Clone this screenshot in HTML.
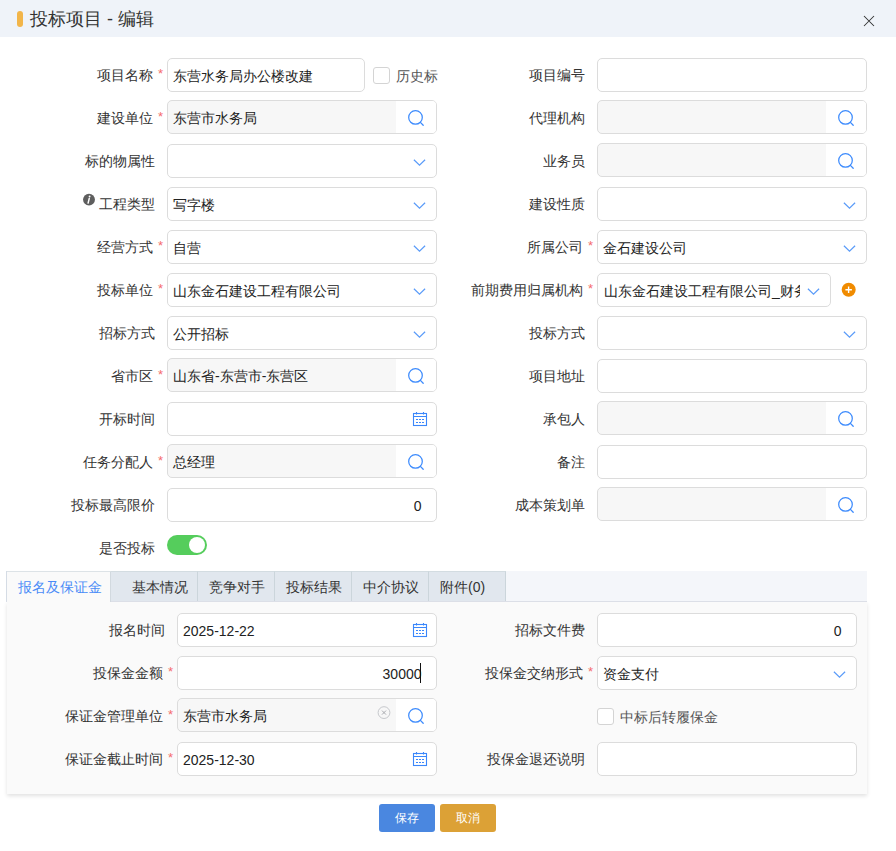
<!DOCTYPE html><html><head><meta charset="utf-8"><style>
*{box-sizing:border-box;margin:0;padding:0}
html,body{width:896px;height:851px;background:#fff;overflow:hidden;font-family:"Liberation Sans",sans-serif;font-size:14px;color:#333;position:relative}
.hdr{position:absolute;left:0;top:0;width:896px;height:37px;background:#eff3f9}
.bar{position:absolute;left:17px;top:11px;width:6px;height:16px;border-radius:3px;background:#f2b54a}
.title{position:absolute;left:30px;top:1px;height:37px;line-height:37px;font-size:18px;color:#333}
.close{position:absolute;left:862px;top:14px;width:14px;height:14px}
.lbl{position:absolute;width:300px;height:34px;line-height:34px;text-align:right;color:#333;white-space:nowrap}
.ast{position:absolute;height:34px;line-height:34px;color:#f56c6c;font-size:13px}
.fld{position:absolute;height:34px;border:1px solid #dcdcdc;border-radius:5px;overflow:hidden}
.txt{position:absolute;top:1px;height:32px;line-height:32px;color:#222;white-space:nowrap}
.sbtn{position:absolute;right:0;top:0;width:40px;height:32px;background:#fff}
.sbtn svg{position:absolute;left:11px;top:8px}
.chev{position:absolute;right:9px;top:13.5px;width:15px;height:8px}
.chev svg{display:block}
.cal{position:absolute;right:8px;top:8px;width:16px;height:16px}
.cal svg{display:block}
.chk{position:absolute;width:17px;height:17px;border:1px solid #d4d4d4;border-radius:3px;background:#fff}
.tabs{position:absolute;left:6px;top:571px;width:861px;height:31px;background:#f4f6fa;border-bottom:1px solid #dcdfe7;border-left:1px solid #d5dce5}
.tab{position:absolute;top:0;height:30px;line-height:31px;background:#e1e7ee;border-top:1px solid #d3dce1;border-right:1px solid #cbd5db;color:#333;white-space:nowrap}
.panel{position:absolute;left:7px;top:602px;width:860px;height:192px;background:#fafafa;box-shadow:0 2px 4px rgba(0,0,0,.12)}
.btn{position:absolute;top:804px;width:56px;height:28px;border-radius:3px;color:#fff;text-align:center;line-height:28px;font-size:12px;font-weight:500}
</style></head><body>
<div class="hdr"><div class="bar"></div><div class="title">投标项目 - 编辑</div>
<svg class="close" viewBox="0 0 14 14"><path d="M2 2 L12 12 M12 2 L2 12" stroke="#333" stroke-width="1.05"/></svg></div>

<div class="lbl" style="left:-147px;top:58px;">项目名称</div>
<div class="ast" style="left:158px;top:57px;">*</div>
<div class="fld" style="left:167px;top:58px;width:198px;background:#fff">
<div class="txt" style="left:5px;">东营水务局办公楼改建</div>
</div>
<div class="lbl" style="left:284.5px;top:58px;">项目编号</div>
<div class="fld" style="left:597px;top:58px;width:270px;background:#fff">
</div>
<div class="lbl" style="left:-147px;top:101px;">建设单位</div>
<div class="ast" style="left:158px;top:100px;">*</div>
<div class="fld" style="left:167px;top:100px;width:270px;background:#f7f7f7">
<div class="sbtn"><svg width="18" height="18" viewBox="0 0 18 18"><circle cx="8.5" cy="8.4" r="6.8" fill="none" stroke="#3d8bfd" stroke-width="1.25"/><path d="M13.4 13.4 L16.2 16.2" stroke="#3d8bfd" stroke-width="1.3" stroke-linecap="round"/></svg></div>
<div class="txt" style="left:5px;">东营市水务局</div>
</div>
<div class="lbl" style="left:284.5px;top:101px;">代理机构</div>
<div class="fld" style="left:597px;top:100px;width:270px;background:#f7f7f7">
<div class="sbtn"><svg width="18" height="18" viewBox="0 0 18 18"><circle cx="8.5" cy="8.4" r="6.8" fill="none" stroke="#3d8bfd" stroke-width="1.25"/><path d="M13.4 13.4 L16.2 16.2" stroke="#3d8bfd" stroke-width="1.3" stroke-linecap="round"/></svg></div>
</div>
<div class="lbl" style="left:-145.5px;top:144px;">标的物属性</div>
<div class="fld" style="left:167px;top:144px;width:270px;background:#fff">
<div class="chev"><svg width="15" height="8" viewBox="0 0 15 8"><path d="M1.9 0.8 L7.5 6.2 L13.1 0.8" fill="none" stroke="#5b9cf9" stroke-width="1.2"/></svg></div>
</div>
<div class="lbl" style="left:284.5px;top:144px;">业务员</div>
<div class="fld" style="left:597px;top:143px;width:270px;background:#f7f7f7">
<div class="sbtn"><svg width="18" height="18" viewBox="0 0 18 18"><circle cx="8.5" cy="8.4" r="6.8" fill="none" stroke="#3d8bfd" stroke-width="1.25"/><path d="M13.4 13.4 L16.2 16.2" stroke="#3d8bfd" stroke-width="1.3" stroke-linecap="round"/></svg></div>
</div>
<div class="lbl" style="left:-145.5px;top:187px;">工程类型</div>
<div class="fld" style="left:167px;top:187px;width:270px;background:#fff">
<div class="chev"><svg width="15" height="8" viewBox="0 0 15 8"><path d="M1.9 0.8 L7.5 6.2 L13.1 0.8" fill="none" stroke="#5b9cf9" stroke-width="1.2"/></svg></div>
<div class="txt" style="left:5px;">写字楼</div>
</div>
<div class="lbl" style="left:284.5px;top:187px;">建设性质</div>
<div class="fld" style="left:597px;top:187px;width:270px;background:#fff">
<div class="chev"><svg width="15" height="8" viewBox="0 0 15 8"><path d="M1.9 0.8 L7.5 6.2 L13.1 0.8" fill="none" stroke="#5b9cf9" stroke-width="1.2"/></svg></div>
</div>
<div class="lbl" style="left:-147px;top:230px;">经营方式</div>
<div class="ast" style="left:158px;top:229px;">*</div>
<div class="fld" style="left:167px;top:230px;width:270px;background:#fff">
<div class="chev"><svg width="15" height="8" viewBox="0 0 15 8"><path d="M1.9 0.8 L7.5 6.2 L13.1 0.8" fill="none" stroke="#5b9cf9" stroke-width="1.2"/></svg></div>
<div class="txt" style="left:5px;">自营</div>
</div>
<div class="lbl" style="left:283px;top:230px;">所属公司</div>
<div class="ast" style="left:588px;top:229px;">*</div>
<div class="fld" style="left:597px;top:230px;width:270px;background:#fff">
<div class="chev"><svg width="15" height="8" viewBox="0 0 15 8"><path d="M1.9 0.8 L7.5 6.2 L13.1 0.8" fill="none" stroke="#5b9cf9" stroke-width="1.2"/></svg></div>
<div class="txt" style="left:5px;">金石建设公司</div>
</div>
<div class="lbl" style="left:-147px;top:273px;">投标单位</div>
<div class="ast" style="left:158px;top:272px;">*</div>
<div class="fld" style="left:167px;top:273px;width:270px;background:#fff">
<div class="chev"><svg width="15" height="8" viewBox="0 0 15 8"><path d="M1.9 0.8 L7.5 6.2 L13.1 0.8" fill="none" stroke="#5b9cf9" stroke-width="1.2"/></svg></div>
<div class="txt" style="left:5px;">山东金石建设工程有限公司</div>
</div>
<div class="lbl" style="left:283px;top:273px;">前期费用归属机构</div>
<div class="ast" style="left:588px;top:272px;">*</div>
<div class="fld" style="left:597px;top:273px;width:234px;background:#fff"><div class="txt" style="left:6px;width:196px;overflow:hidden">山东金石建设工程有限公司_财务</div><div class="chev" style="right:9px;top:14px"><svg width="15" height="8" viewBox="0 0 15 8"><path d="M1.9 0.8 L7.5 6.2 L13.1 0.8" fill="none" stroke="#5b9cf9" stroke-width="1.2"/></svg></div></div>
<svg style="position:absolute;left:841px;top:282px" width="15" height="15" viewBox="0 0 15 15"><circle cx="7.7" cy="7.8" r="7" fill="#f08b00"/><path d="M7.6 4.6 V11 M4.4 7.8 H10.9" stroke="#fff" stroke-width="1.4"/></svg>
<div class="lbl" style="left:-145.5px;top:316px;">招标方式</div>
<div class="fld" style="left:167px;top:316px;width:270px;background:#fff">
<div class="chev"><svg width="15" height="8" viewBox="0 0 15 8"><path d="M1.9 0.8 L7.5 6.2 L13.1 0.8" fill="none" stroke="#5b9cf9" stroke-width="1.2"/></svg></div>
<div class="txt" style="left:5px;">公开招标</div>
</div>
<div class="lbl" style="left:284.5px;top:316px;">投标方式</div>
<div class="fld" style="left:597px;top:316px;width:270px;background:#fff">
<div class="chev"><svg width="15" height="8" viewBox="0 0 15 8"><path d="M1.9 0.8 L7.5 6.2 L13.1 0.8" fill="none" stroke="#5b9cf9" stroke-width="1.2"/></svg></div>
</div>
<div class="lbl" style="left:-147px;top:359px;">省市区</div>
<div class="ast" style="left:158px;top:358px;">*</div>
<div class="fld" style="left:167px;top:358px;width:270px;background:#f7f7f7">
<div class="sbtn"><svg width="18" height="18" viewBox="0 0 18 18"><circle cx="8.5" cy="8.4" r="6.8" fill="none" stroke="#3d8bfd" stroke-width="1.25"/><path d="M13.4 13.4 L16.2 16.2" stroke="#3d8bfd" stroke-width="1.3" stroke-linecap="round"/></svg></div>
<div class="txt" style="left:5px;">山东省-东营市-东营区</div>
</div>
<div class="lbl" style="left:284.5px;top:359px;">项目地址</div>
<div class="fld" style="left:597px;top:359px;width:270px;background:#fff">
</div>
<div class="lbl" style="left:-145.5px;top:402px;">开标时间</div>
<div class="fld" style="left:167px;top:402px;width:270px;background:#fff">
<div class="cal"><svg width="16" height="16" viewBox="0 0 16 16"><rect x="1.5" y="2.5" width="13" height="12" fill="none" stroke="#3b87fb" stroke-width="1.1"/><path d="M1.5 5.5 H14.5" stroke="#3b87fb" stroke-width="1.1"/><path d="M4.5 1 V3.5 M11.5 1 V3.5" stroke="#3b87fb" stroke-width="1.1"/><path d="M4 8.5 H12 M4 11.5 H12" stroke="#3b87fb" stroke-width="1.1" stroke-dasharray="2 1"/></svg></div>
</div>
<div class="lbl" style="left:284.5px;top:402px;">承包人</div>
<div class="fld" style="left:597px;top:401px;width:270px;background:#f7f7f7">
<div class="sbtn"><svg width="18" height="18" viewBox="0 0 18 18"><circle cx="8.5" cy="8.4" r="6.8" fill="none" stroke="#3d8bfd" stroke-width="1.25"/><path d="M13.4 13.4 L16.2 16.2" stroke="#3d8bfd" stroke-width="1.3" stroke-linecap="round"/></svg></div>
</div>
<div class="lbl" style="left:-147px;top:445px;">任务分配人</div>
<div class="ast" style="left:158px;top:444px;">*</div>
<div class="fld" style="left:167px;top:444px;width:270px;background:#f7f7f7">
<div class="sbtn"><svg width="18" height="18" viewBox="0 0 18 18"><circle cx="8.5" cy="8.4" r="6.8" fill="none" stroke="#3d8bfd" stroke-width="1.25"/><path d="M13.4 13.4 L16.2 16.2" stroke="#3d8bfd" stroke-width="1.3" stroke-linecap="round"/></svg></div>
<div class="txt" style="left:5px;">总经理</div>
</div>
<div class="lbl" style="left:284.5px;top:445px;">备注</div>
<div class="fld" style="left:597px;top:445px;width:270px;background:#fff">
</div>
<div class="lbl" style="left:-145.5px;top:488px;">投标最高限价</div>
<div class="fld" style="left:167px;top:488px;width:270px;background:#fff">
<div class="txt" style="right:14.5px;text-align:right">0</div>
</div>
<div class="lbl" style="left:284.5px;top:488px;">成本策划单</div>
<div class="fld" style="left:597px;top:487px;width:270px;background:#f7f7f7">
<div class="sbtn"><svg width="18" height="18" viewBox="0 0 18 18"><circle cx="8.5" cy="8.4" r="6.8" fill="none" stroke="#3d8bfd" stroke-width="1.25"/><path d="M13.4 13.4 L16.2 16.2" stroke="#3d8bfd" stroke-width="1.3" stroke-linecap="round"/></svg></div>
</div>
<div class="chk" style="left:373px;top:67px"></div>
<div class="lbl" style="left:395.5px;top:58.7px;width:60px;text-align:left;color:#555">历史标</div>
<svg style="position:absolute;left:82px;top:193px" width="14" height="14" viewBox="0 0 14 14"><circle cx="7" cy="6.6" r="5.95" fill="#5e5e5e"/><circle cx="7.6" cy="3.5" r="0.95" fill="#fff"/><path d="M7.2 5.6 L6.1 10.1" stroke="#fff" stroke-width="1.5" stroke-linecap="round"/></svg>
<div class="lbl" style="left:-145px;top:531px">是否投标</div>
<div style="position:absolute;left:167px;top:535px;width:40px;height:20px;border-radius:10px;background:#55cd5c"></div>
<div style="position:absolute;left:189px;top:537px;width:16px;height:16px;border-radius:8px;background:#fff"></div>
<div class="panel"></div>
<div class="tabs">
<div class="tab" style="left:0;width:104px;background:#fafafa;color:#4a8cf7;border-right:1px solid #d2d9df;border-top-color:#dde3e7;padding-left:11px;height:31px">报名及保证金</div>
<div class="tab" style="left:104px;width:87px;padding-left:21px">基本情况</div>
<div class="tab" style="left:191px;width:77px;padding-left:11px">竞争对手</div>
<div class="tab" style="left:268px;width:77px;padding-left:11px">投标结果</div>
<div class="tab" style="left:345px;width:77px;padding-left:11px">中介协议</div>
<div class="tab" style="left:422px;width:77px;padding-left:11px">附件(0)</div>
</div>
<div class="lbl" style="left:-135.5px;top:613px;">报名时间</div>
<div class="fld" style="left:177px;top:613px;width:260px;background:#fff">
<div class="cal"><svg width="16" height="16" viewBox="0 0 16 16"><rect x="1.5" y="2.5" width="13" height="12" fill="none" stroke="#3b87fb" stroke-width="1.1"/><path d="M1.5 5.5 H14.5" stroke="#3b87fb" stroke-width="1.1"/><path d="M4.5 1 V3.5 M11.5 1 V3.5" stroke="#3b87fb" stroke-width="1.1"/><path d="M4 8.5 H12 M4 11.5 H12" stroke="#3b87fb" stroke-width="1.1" stroke-dasharray="2 1"/></svg></div>
<div class="txt" style="left:5px;">2025-12-22</div>
</div>
<div class="lbl" style="left:284.5px;top:613px;">招标文件费</div>
<div class="fld" style="left:597px;top:613px;width:260px;background:#fff">
<div class="txt" style="right:14.5px;text-align:right">0</div>
</div>
<div class="lbl" style="left:-137px;top:656px;">投保金金额</div>
<div class="ast" style="left:168px;top:655px;">*</div>
<div class="fld" style="left:177px;top:656px;width:260px;background:#fff">
<div class="txt" style="right:14.5px;text-align:right">30000</div>
</div>
<div style="position:absolute;left:420px;top:663px;width:1px;height:20px;background:#111"></div>
<div class="lbl" style="left:283px;top:656px;">投保金交纳形式</div>
<div class="ast" style="left:588px;top:655px;">*</div>
<div class="fld" style="left:597px;top:656px;width:260px;background:#fff">
<div class="chev"><svg width="15" height="8" viewBox="0 0 15 8"><path d="M1.9 0.8 L7.5 6.2 L13.1 0.8" fill="none" stroke="#5b9cf9" stroke-width="1.2"/></svg></div>
<div class="txt" style="left:5px;">资金支付</div>
</div>
<div class="lbl" style="left:-137px;top:699px;">保证金管理单位</div>
<div class="ast" style="left:168px;top:698px;">*</div>
<div class="fld" style="left:177px;top:698px;width:260px;background:#f7f7f7">
<div class="sbtn"><svg width="18" height="18" viewBox="0 0 18 18"><circle cx="8.5" cy="8.4" r="6.8" fill="none" stroke="#3d8bfd" stroke-width="1.25"/><path d="M13.4 13.4 L16.2 16.2" stroke="#3d8bfd" stroke-width="1.3" stroke-linecap="round"/></svg></div>
<div class="txt" style="left:5px;">东营市水务局</div>
</div>
<svg style="position:absolute;left:377px;top:706px" width="14" height="14" viewBox="0 0 14 14"><circle cx="7" cy="6.6" r="5.9" fill="none" stroke="#c6c8cc" stroke-width="1"/><path d="M5 4.6 L9 8.6 M9 4.6 L5 8.6" stroke="#a9abb0" stroke-width="1"/></svg>
<div class="chk" style="left:597px;top:708px"></div>
<div class="lbl" style="left:619.5px;top:700px;width:120px;text-align:left;color:#555">中标后转履保金</div>
<div class="lbl" style="left:-137px;top:742px;">保证金截止时间</div>
<div class="ast" style="left:168px;top:741px;">*</div>
<div class="fld" style="left:177px;top:742px;width:260px;background:#fff">
<div class="cal"><svg width="16" height="16" viewBox="0 0 16 16"><rect x="1.5" y="2.5" width="13" height="12" fill="none" stroke="#3b87fb" stroke-width="1.1"/><path d="M1.5 5.5 H14.5" stroke="#3b87fb" stroke-width="1.1"/><path d="M4.5 1 V3.5 M11.5 1 V3.5" stroke="#3b87fb" stroke-width="1.1"/><path d="M4 8.5 H12 M4 11.5 H12" stroke="#3b87fb" stroke-width="1.1" stroke-dasharray="2 1"/></svg></div>
<div class="txt" style="left:5px;">2025-12-30</div>
</div>
<div class="lbl" style="left:284.5px;top:742px;">投保金退还说明</div>
<div class="fld" style="left:597px;top:742px;width:260px;background:#fff">
</div>
<div class="btn" style="left:379px;background:#4a87e0">保存</div>
<div class="btn" style="left:440px;background:#dca136">取消</div>
</body></html>
